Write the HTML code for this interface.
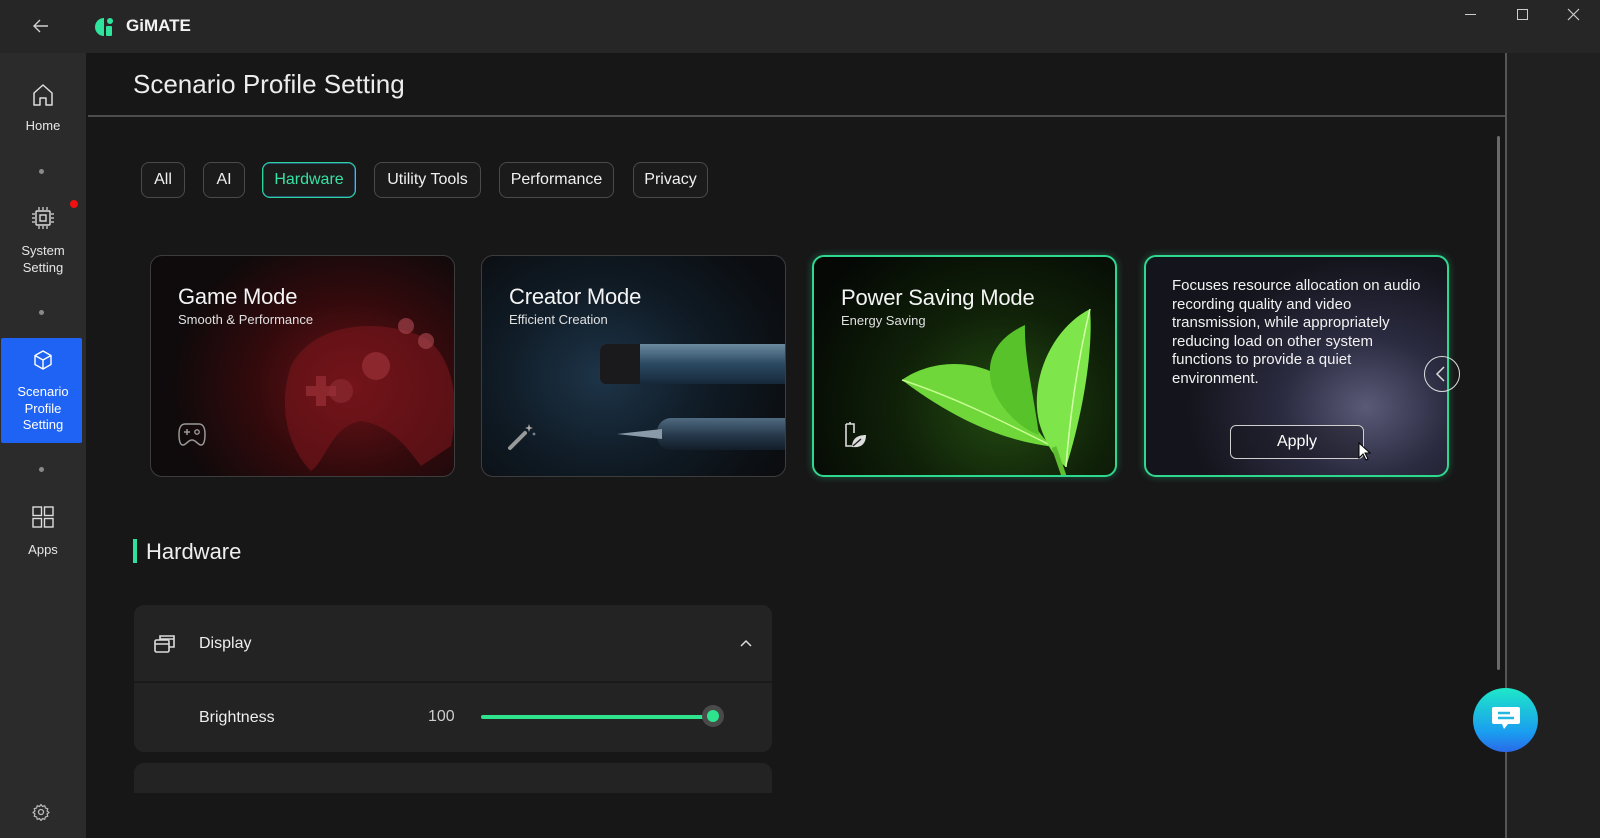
<!DOCTYPE html>
<html><head><meta charset="utf-8">
<style>
*{box-sizing:border-box;margin:0;padding:0}
body{width:1600px;height:838px;overflow:hidden;background:#202020;font-family:"Liberation Sans",sans-serif;color:#e8e8e8;position:relative}
.abs{position:absolute}
#title{left:0;top:0;width:1600px;height:53px;background:#262626}
#side{left:0;top:53px;width:86px;height:785px;background:#2b2b2b}
#main{left:86px;top:53px;width:1420px;height:785px;background:#171717}
.navt{position:absolute;width:86px;text-align:center;font-size:13px;color:#e6e6e6;line-height:16.5px}
.dot{position:absolute;left:39px;width:5px;height:5px;border-radius:50%;background:#8a8a8a}
.tab{position:absolute;top:162px;height:36px;border:1px solid #4a4a4a;border-radius:8px;font-size:16px;line-height:34px;text-align:center;color:#f0f0f0;background:#1b1b1b}
.card{position:absolute;top:255px;width:305px;height:222px;border-radius:12px;border:1.5px solid #3d3d3d;overflow:hidden}
.ct{position:absolute;left:27px;top:28px;font-size:22px;color:#f4f4f4;letter-spacing:-0.2px}
.cs{position:absolute;left:27px;top:56px;font-size:13px;color:#e0e0e0}
</style></head><body>
<div id="title" class="abs"></div>
<svg class="abs" style="left:32px;top:18px" width="18" height="16" viewBox="0 0 18 16"><path d="M16 8H2M8 2L2 8l6 6" stroke="#cfcfcf" stroke-width="1.4" fill="none"/></svg>
<svg class="abs" style="left:95px;top:17px" width="20" height="20" viewBox="0 0 20 20"><path d="M9 1A9 9 0 0 0 9 19Z" fill="#2ee59d"/><circle cx="15" cy="4" r="3" fill="#2ee59d"/><rect x="11" y="9" width="6" height="10" rx="1" fill="#2ee59d"/></svg>
<div class="abs" style="left:126px;top:16px;font-size:17px;font-weight:bold;color:#f2f2f2">GiMATE</div>
<div class="abs" style="left:1465px;top:14px;width:11px;height:1px;background:#ccc"></div>
<div class="abs" style="left:1517px;top:9px;width:11px;height:11px;border:1px solid #ccc"></div>
<svg class="abs" style="left:1567px;top:8px" width="13" height="13"><path d="M1 1L12 12M12 1L1 12" stroke="#ccc" stroke-width="1.2"/></svg>

<div id="side" class="abs"></div>
<svg class="abs" style="left:31px;top:83px" width="24" height="24" viewBox="0 0 24 24"><path d="M3 10L12 2l9 8v12h-6v-7H9v7H3Z" stroke="#ddd" stroke-width="1.5" fill="none" stroke-linejoin="round"/></svg>
<div class="navt" style="top:118px">Home</div>
<div class="dot" style="top:169px"></div>
<svg class="abs" style="left:31px;top:206px" width="24" height="24" viewBox="0 0 24 24"><rect x="5" y="5" width="14" height="14" rx="1" stroke="#ddd" stroke-width="1.4" fill="none"/><rect x="9" y="9" width="6" height="6" stroke="#ddd" stroke-width="1.4" fill="none"/><path d="M8 1v3M12 1v3M16 1v3M8 20v3M12 20v3M16 20v3M1 8h3M1 12h3M1 16h3M20 8h3M20 12h3M20 16h3" stroke="#ddd" stroke-width="1.2"/></svg>
<div class="abs" style="left:70px;top:200px;width:8px;height:8px;border-radius:50%;background:#f01010"></div>
<div class="navt" style="top:243px">System<br>Setting</div>
<div class="dot" style="top:310px"></div>
<div class="abs" style="left:1px;top:338px;width:81px;height:105px;background:#1f63f4;border-radius:2px"></div>
<svg class="abs" style="left:32px;top:349px" width="22" height="22" viewBox="0 0 22 22"><path d="M11 2l8 4.5v9L11 20l-8-4.5v-9Z M3 6.5l8 4.5 8-4.5 M11 11v9" stroke="#fff" stroke-width="1.4" fill="none" stroke-linejoin="round"/></svg>
<div class="navt" style="top:384px;color:#fff">Scenario<br>Profile<br>Setting</div>
<div class="dot" style="top:467px"></div>
<svg class="abs" style="left:32px;top:506px" width="22" height="22" viewBox="0 0 22 22"><g stroke="#ddd" stroke-width="1.4" fill="none"><rect x="1" y="1" width="8.5" height="8.5"/><rect x="12.5" y="1" width="8.5" height="8.5"/><rect x="1" y="12.5" width="8.5" height="8.5"/><rect x="12.5" y="12.5" width="8.5" height="8.5"/></g></svg>
<div class="navt" style="top:542px">Apps</div>
<svg class="abs" style="left:32px;top:803px" width="18" height="18" viewBox="0 0 18 18"><circle cx="9" cy="9" r="2.5" stroke="#bbb" stroke-width="1.3" fill="none"/><path d="M9 1.5l1.5 2 2.3-.8.6 2.4 2.4.6-.8 2.3 2 1.5-2 1.5.8 2.3-2.4.6-.6 2.4-2.3-.8-1.5 2-1.5-2-2.3.8-.6-2.4-2.4-.6.8-2.3-2-1.5 2-1.5-.8-2.3 2.4-.6.6-2.4 2.3.8Z" stroke="#bbb" stroke-width="1.2" fill="none" stroke-linejoin="round"/></svg>

<div id="main" class="abs"></div>
<div class="abs" style="left:133px;top:69px;font-size:26px;color:#ececec">Scenario Profile Setting</div>
<div class="abs" style="left:88px;top:115px;width:1418px;height:2px;background:#4d4d4d"></div>
<div class="abs" style="left:1497px;top:136px;width:3px;height:534px;background:#6a6a6a;border-radius:2px"></div>
<div class="abs" style="left:1505px;top:53px;width:2px;height:785px;background:#555"></div>

<div class="tab" style="left:141px;width:44px">All</div>
<div class="tab" style="left:203px;width:42px">AI</div>
<div class="tab" style="left:262px;width:94px;border-color:#2fd49a;color:#36e3a3;box-shadow:inset 0 0 0 0.5px #2a8fd0">Hardware</div>
<div class="tab" style="left:374px;width:107px">Utility Tools</div>
<div class="tab" style="left:499px;width:115px">Performance</div>
<div class="tab" style="left:633px;width:75px">Privacy</div>

<div class="card" style="left:150px;background:radial-gradient(ellipse 180px 160px at 200px 130px,#6a1216 0%,#320a0c 55%,#0f0a0b 100%)">
<svg class="abs" style="left:100px;top:40px" width="205" height="180" viewBox="0 0 205 180"><path d="M40 70c20-40 80-50 130-30 30 15 40 60 30 110l-30 20c-15-20-30-40-60-45-30 5-35 40-50 50-20-20-35-60-20-105Z" fill="#7a161c" opacity=".6"/><circle cx="125" cy="70" r="14" fill="#9a3038" opacity=".7"/><circle cx="90" cy="95" r="12" fill="#8a2a30" opacity=".7"/><circle cx="155" cy="30" r="8" fill="#a04048" opacity=".7"/><circle cx="175" cy="45" r="8" fill="#a04048" opacity=".7"/><path d="M55 95h30M70 80v30" stroke="#9a3038" stroke-width="10" opacity=".7"/></svg>
<div class="ct">Game Mode</div><div class="cs">Smooth &amp; Performance</div>
<svg class="abs" style="left:26px;top:165px" width="30" height="26" viewBox="0 0 30 26"><path d="M8 3h14c4 0 6 4 6 10s-1 11-4 11-5-5-9-5-6 5-9 5-4-5-4-11 2-10 6-10Z" stroke="#999" stroke-width="1.5" fill="none"/><path d="M7 11h6M10 8v6" stroke="#999" stroke-width="1.5"/><circle cx="20" cy="11" r="2.2" stroke="#999" stroke-width="1.4" fill="none"/></svg>
</div>

<div class="card" style="left:481px;background:radial-gradient(ellipse 200px 170px at 120px 120px,#1d3448 0%,#0f1a24 55%,#0b0d10 100%)">
<div class="abs" style="left:118px;top:88px;width:190px;height:40px;border-radius:6px 0 0 6px;background:linear-gradient(180deg,#6a8aa0,#2b4a62 50%,#16283a)"></div>
<div class="abs" style="left:118px;top:88px;width:40px;height:40px;border-radius:6px 0 0 6px;background:#1a1a1c"></div>
<div class="abs" style="left:175px;top:162px;width:132px;height:32px;border-radius:14px 0 0 14px;background:linear-gradient(180deg,#4f6a80,#26384a 55%,#121d28)"></div>
<div class="abs" style="left:135px;top:173px;width:45px;height:10px;clip-path:polygon(0 50%,100% 0,100% 100%);background:#8a9aa8"></div>
<div class="ct">Creator Mode</div><div class="cs">Efficient Creation</div>
<svg class="abs" style="left:25px;top:165px" width="30" height="30" viewBox="0 0 30 30"><path d="M3 27L18 12" stroke="#999" stroke-width="4" stroke-linecap="round"/><path d="M22 3l1 3 3 1-3 1-1 3-1-3-3-1 3-1Z M27 11l.6 1.5 1.4.5-1.4.5-.6 1.5-.6-1.5-1.4-.5 1.4-.5Z" fill="#aaa"/></svg>
</div>

<div class="card" style="left:812px;border:2px solid #2fd88f;box-shadow:0 0 8px rgba(47,216,143,.35);background:radial-gradient(ellipse 220px 200px at 190px 150px,#234a12 0%,#0f2008 50%,#050805 100%)">
<svg class="abs" style="left:0;top:0" width="305" height="222" viewBox="0 0 305 222"><path d="M88 123C120 100 175 100 205 135 215 160 225 180 240 190 200 185 150 170 88 123Z" fill="#6fd73a"/><path d="M88 123C140 140 190 165 240 190" stroke="#c8ff90" stroke-width="1.5" fill="none"/><path d="M211 68C185 80 170 100 178 130 190 160 215 175 225 178 220 140 210 100 211 68Z" fill="#58c22a"/><path d="M276 52C240 70 215 120 225 165 232 190 245 205 252 210 265 170 280 100 276 52Z" fill="#7ee64a"/><path d="M276 52C262 110 255 170 252 210" stroke="#d4ffa8" stroke-width="1.5" fill="none"/><path d="M240 190L251 222" stroke="#5fbf30" stroke-width="5"/></svg>
<div class="ct">Power Saving Mode</div><div class="cs">Energy Saving</div>
<svg class="abs" style="left:28px;top:162px" width="26" height="32" viewBox="0 0 26 32"><path d="M8 3v2M4 5h8v9M4 5v22h6" stroke="#ddd" stroke-width="1.6" fill="none"/><path d="M10 28c0-8 5-12 14-12 0 9-5 13-14 12Z" fill="#ddd"/><path d="M11 27l8-7" stroke="#222" stroke-width="1.4"/></svg>
</div>

<div class="card" style="left:1144px;border:2px solid #2fd88f;box-shadow:0 0 8px rgba(47,216,143,.35);background:radial-gradient(ellipse 180px 150px at 220px 150px,#5a5a78 0%,#2c2c42 45%,#14141c 100%)">
<div class="abs" style="left:26px;top:20px;width:262px;font-size:15px;line-height:18.6px;color:#f2f2f2">Focuses resource allocation on audio recording quality and video transmission, while appropriately reducing load on other system functions to provide a quiet environment.</div>
<div class="abs" style="left:84px;top:168px;width:134px;height:34px;border:1px solid #cfcfcf;border-radius:6px;text-align:center;font-size:16px;line-height:32px;color:#fff;background:rgba(20,20,25,.4)">Apply</div>
</div>
<div class="abs" style="left:1424px;top:356px;width:36px;height:36px;border:1.5px solid #ddd;border-radius:50%"></div>
<svg class="abs" style="left:1434px;top:365px" width="14" height="18"><path d="M10 2L3 9l7 7" stroke="#ddd" stroke-width="1.5" fill="none"/></svg>
<svg class="abs" style="left:1358px;top:442px" width="14" height="20" viewBox="0 0 14 20"><path d="M1 1v15l4-4 3 6 2-1-3-6h5Z" fill="#fff" stroke="#000" stroke-width="1"/></svg>

<div class="abs" style="left:133px;top:539px;width:4px;height:24px;background:#2fe0a0"></div>
<div class="abs" style="left:146px;top:539px;font-size:22px;color:#eee">Hardware</div>

<div class="abs" style="left:86px;top:600px;width:1410px;height:193px;overflow:hidden">
<div class="abs" style="left:48px;top:5px;width:638px;height:147px;background:#232323;border-radius:10px"></div>
<div class="abs" style="left:48px;top:81px;width:638px;height:2px;background:#1a1a1a"></div>
<div class="abs" style="left:48px;top:163px;width:638px;height:60px;background:#232323;border-radius:10px"></div>
</div>
<svg class="abs" style="left:153px;top:632px" width="24" height="24" viewBox="0 0 24 24"><rect x="2" y="8" width="14" height="12" rx="1.5" stroke="#ddd" stroke-width="1.6" fill="none"/><path d="M2 12h14M7 8V4h14v11h-5M7 7h14" stroke="#ddd" stroke-width="1.6" fill="none"/></svg>
<div class="abs" style="left:199px;top:635px;font-size:16px;color:#eee">Display</div>
<svg class="abs" style="left:739px;top:638px" width="14" height="10"><path d="M2 8l5-5 5 5" stroke="#ddd" stroke-width="1.5" fill="none"/></svg>
<div class="abs" style="left:199px;top:709px;font-size:16px;color:#eee">Brightness</div>
<div class="abs" style="left:428px;top:708px;font-size:16px;color:#ccc">100</div>
<div class="abs" style="left:481px;top:715px;width:226px;height:4px;background:#2fe38c;border-radius:2px"></div>
<div class="abs" style="left:702px;top:705px;width:22px;height:22px;border-radius:50%;background:#4a4a4a"></div>
<div class="abs" style="left:707px;top:710px;width:12px;height:12px;border-radius:50%;background:#2fe38c"></div>

<div class="abs" style="left:1473px;top:688px;width:65px;height:64px;border-radius:50%;background:linear-gradient(180deg,#1ee8c8,#1a9cf0 70%,#2a6ae8)"></div>
<svg class="abs" style="left:1490px;top:703px" width="32" height="32" viewBox="0 0 32 32"><path d="M4 4h24a2 2 0 0 1 2 2v13a2 2 0 0 1-2 2H18l-4 5-2-5H4a2 2 0 0 1-2-2V6a2 2 0 0 1 2-2Z" fill="#fff"/><path d="M8 10h12M8 15h16" stroke="#22b7e0" stroke-width="2.4"/></svg>
</body></html>
